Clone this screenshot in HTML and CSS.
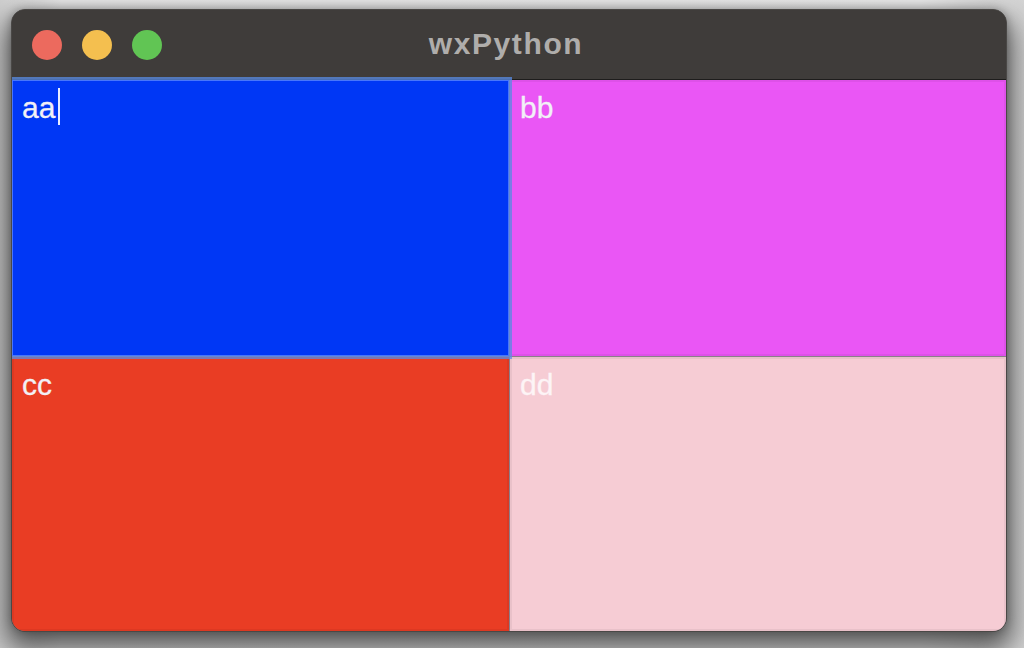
FILE: index.html
```html
<!DOCTYPE html>
<html>
<head>
<meta charset="utf-8">
<link rel="stylesheet" href="styles.css">
</head>
<body>
<div class="window">
  <div class="titlebar">
    <div class="lights">
      <span class="light red"></span>
      <span class="light yellow"></span>
      <span class="light green"></span>
    </div>
    <div class="title">wxPython</div>
  </div>
  <div class="grid">
    <div class="pane blue focused"><span class="txt">aa</span><span class="caret"></span></div>
    <div class="pane magenta"><span class="txt">bb</span></div>
    <div class="pane red-pane"><span class="txt">cc</span></div>
    <div class="pane pink"><span class="txt">dd</span></div>
  </div>
</div>
</body>
</html>
```
FILE: styles.css
```css
html, body {
  margin: 0;
  padding: 0;
  width: 1024px;
  height: 648px;
  overflow: hidden;
}
body {
  background: linear-gradient(90deg, #d0d0d0 0%, #ececec 6%, #efefef 90%, #d4d4d4 100%);
  font-family: "Liberation Sans", Arial, sans-serif;
  padding: 9px 0 0 11px;
  box-sizing: border-box;
}
.window {
  width: 996px;
  height: 623px;
  border-radius: 14px;
  border: 1px solid #4a4846;
  box-sizing: border-box;
  overflow: hidden;
  display: flex;
  flex-direction: column;
  box-shadow: 0 14px 28px 6px rgba(0,0,0,0.6), 0 0 8px rgba(0,0,0,0.25);
  background: #3f3c3a;
}
.titlebar {
  height: 69px;
  flex: none;
  background: #3f3c3a;
  border-bottom: 1px solid #1e1d1c;
  display: flex;
  align-items: center;
  position: relative;
}
.lights {
  display: flex;
  gap: 20px;
  padding-left: 20px;
  padding-top: 1px;
}
.light {
  width: 30px;
  height: 30px;
  border-radius: 50%;
  display: block;
}
.red { background: #ec6a5e; }
.yellow { background: #f4bf4f; }
.green { background: #61c554; }
.title {
  position: absolute;
  left: 0;
  right: 0;
  top: 17px;
  text-align: center;
  font-size: 30px;
  font-weight: bold;
  letter-spacing: 1.6px;
  color: #afadab;
  line-height: 34px;
  padding-right: 6px;
}
.grid {
  flex: 1;
  display: grid;
  grid-template-columns: 497px 1fr;
  grid-template-rows: 276px 1fr;
  gap: 1px;
  background: #8a7f8a;
}
.pane {
  position: relative;
  padding: 13px 0 0 10px;
  box-shadow: inset 0 0 0 2px rgba(0,0,0,0.05);
}
.txt {
  font-size: 30px;
  line-height: 1;
  color: #f2f0f6;
  -webkit-text-stroke: 0.3px currentColor;
}
.blue { background: #0037f5; }
.magenta { background: #ea56f5; }
.red-pane { background: #e93d24; }
.pink { background: #f6ccd4; }
.pink .txt { color: #fdf4f6; }
.focused {
  z-index: 2;
  box-shadow: 0 0 0 3px rgba(90, 140, 230, 0.75), inset 0 0 0 1px rgba(120,160,255,0.6);
}
.caret {
  position: absolute;
  left: 46px;
  top: 8px;
  width: 2px;
  height: 37px;
  background: #e8ecff;
}
```
